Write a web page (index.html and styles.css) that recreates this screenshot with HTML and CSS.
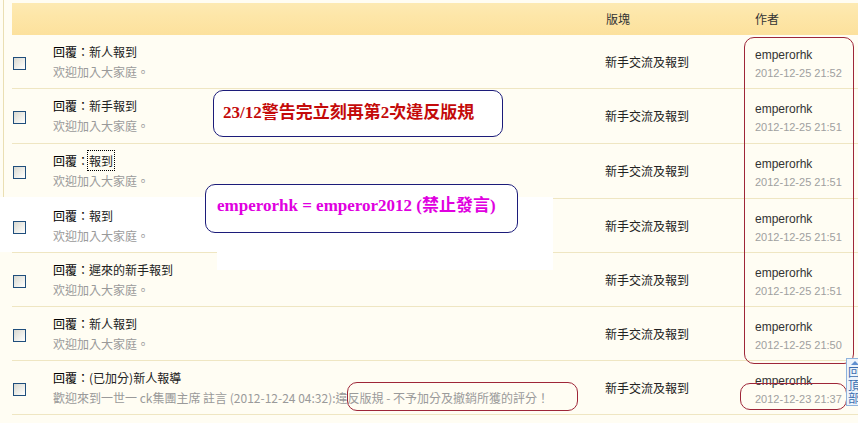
FILE: index.html
```html
<!DOCTYPE html>
<html>
<head>
<meta charset="utf-8">
<link rel="stylesheet" href="styles.css">
</head>
<body>
<div class="page">
  <span class="leftline"></span>
  <div class="list">
    <div class="head">
      <span></span><span></span>
      <span class="h-forum">版塊</span>
      <span class="h-author">作者</span>
    </div>

    <div class="row">
      <div class="cb-cell"><span class="cb"></span></div>
      <div class="topic"><div class="title"><b class="re">回覆：</b>新人報到</div><div class="msg">欢迎加入大家庭。</div></div>
      <div class="forum">新手交流及報到</div>
      <div class="author"><div class="name">emperorhk</div><div class="date">2012-12-25 21:52</div></div>
    </div>

    <div class="row tall">
      <div class="cb-cell"><span class="cb"></span></div>
      <div class="topic"><div class="title"><b class="re">回覆：</b>新手報到</div><div class="msg">欢迎加入大家庭。</div></div>
      <div class="forum">新手交流及報到</div>
      <div class="author"><div class="name">emperorhk</div><div class="date">2012-12-25 21:51</div></div>
    </div>

    <div class="row tall">
      <div class="cb-cell"><span class="cb"></span></div>
      <div class="topic"><div class="title"><b class="re">回覆：</b><span class="focus">報到</span></div><div class="msg">欢迎加入大家庭。</div></div>
      <div class="forum">新手交流及報到</div>
      <div class="author"><div class="name">emperorhk</div><div class="date">2012-12-25 21:51</div></div>
    </div>

    <div class="row">
      <div class="cb-cell"><span class="cb"></span></div>
      <div class="topic"><div class="title"><b class="re">回覆：</b>報到</div><div class="msg">欢迎加入大家庭。</div></div>
      <div class="forum">新手交流及報到</div>
      <div class="author"><div class="name">emperorhk</div><div class="date">2012-12-25 21:51</div></div>
    </div>

    <div class="row">
      <div class="cb-cell"><span class="cb"></span></div>
      <div class="topic"><div class="title"><b class="re">回覆：</b>遲來的新手報到</div><div class="msg">欢迎加入大家庭。</div></div>
      <div class="forum">新手交流及報到</div>
      <div class="author"><div class="name">emperorhk</div><div class="date">2012-12-25 21:51</div></div>
    </div>

    <div class="row">
      <div class="cb-cell"><span class="cb"></span></div>
      <div class="topic"><div class="title"><b class="re">回覆：</b>新人報到</div><div class="msg">欢迎加入大家庭。</div></div>
      <div class="forum">新手交流及報到</div>
      <div class="author"><div class="name">emperorhk</div><div class="date">2012-12-25 21:50</div></div>
    </div>

    <div class="row">
      <div class="cb-cell"><span class="cb"></span></div>
      <div class="topic"><div class="title"><b class="re">回覆：</b>(已加分)新人報導</div><div class="msg">歡迎來到一世一 ck集團主席 註言 (2012-12-24 04:32):違反版規 - 不予加分及撤銷所獲的評分！</div></div>
      <div class="forum">新手交流及報到</div>
      <div class="author"><div class="name">emperorhk</div><div class="date">2012-12-23 21:37</div></div>
    </div>
  </div>

  <div class="patch patch-a"></div>
  <div class="patch patch-b"></div>

  <div class="note note-warn">23/12警告完立刻再第2次違反版規</div>
  <div class="note note-alias">emperorhk = emperor2012 (禁止發言)</div>

  <div class="mark mark-author"></div>
  <div class="mark mark-date"></div>
  <div class="mark mark-msg"></div>

  <div class="backtop"><span class="bt-arrow"></span><span class="bt-text">回頂部</span></div>
</div>
</body>
</html>
```

FILE: styles.css
```css
html, body {
  margin: 0;
  padding: 0;
  overflow: hidden;
}
body {
  background: #fffdf3;
  font-family: "Noto Sans CJK TC", "Liberation Sans", sans-serif;
  font-size: 12px;
  color: #222;
}
.page {
  position: relative;
  width: 858px;
  height: 423px;
  overflow: hidden;
}
.leftline {
  position: absolute;
  left: 3px;
  top: 0;
  width: 1px;
  height: 197px;
  background: #eadfb3;
}
.list {
  margin-left: 12px;
  padding-top: 3px;
}
.head {
  display: grid;
  grid-template-columns: 41px 552px 150px 1fr;
  height: 32px;
  align-items: center;
  background: linear-gradient(#fdeab3, #fde6a8 40%, #fce19d);
  color: #333;
  line-height: 18px;
}
.h-forum { padding-left: 1px; }
.row {
  display: grid;
  grid-template-columns: 41px 552px 150px 1fr;
  height: 54px;
  box-sizing: border-box;
  border-bottom: 1px solid #efe6c2;
}
.row.tall { height: 55px; }
.cb-cell, .topic, .forum, .author {
  position: relative;
  z-index: 2;
}
.cb-cell { padding: 22px 0 0 1px; }
.cb {
  display: block;
  width: 11px;
  height: 11px;
  border: 1px solid #1f4e7c;
  background: linear-gradient(135deg, #d8d8d0, #f4f4f0 70%, #ffffff);
}
.topic {
  padding-top: 7px;
  line-height: 20px;
  white-space: nowrap;
}
.title { color: #222; }
.re { font-weight: normal; color: #000; }
.focus { outline: 1px dotted #000; outline-offset: 1px; }
.msg { color: #9a9a9a; }
.forum {
  padding-top: 18px;
  line-height: 18px;
  color: #222;
}
.author {
  padding-top: 11px;
  line-height: 18px;
  font-family: "Liberation Sans", "DejaVu Sans", sans-serif;
}
.name { font-size: 12px; color: #333; }
.date { font-size: 11px; color: #a0a0a0; }

.patch {
  position: absolute;
  z-index: 1;
  background: #ffffff;
}
.patch-a { left: 0; top: 197px; width: 553px; height: 55px; }
.patch-b { left: 217px; top: 252px; width: 336px; height: 18px; }

.note {
  position: absolute;
  z-index: 3;
  box-sizing: border-box;
  background: #ffffff;
  border: 1px solid #1c1c7a;
  border-radius: 10px;
  font-family: "Liberation Serif", "Noto Sans CJK TC", serif;
  font-weight: bold;
  font-size: 17px;
  line-height: 20px;
  white-space: nowrap;
}
.note-warn {
  left: 213px;
  top: 90px;
  width: 290px;
  height: 47px;
  padding: 12px 0 0 9px;
  color: #c40a0a;
}
.note-alias {
  left: 205px;
  top: 184px;
  width: 313px;
  height: 49px;
  padding: 11px 0 0 11px;
  color: #e000e0;
}

.mark {
  position: absolute;
  z-index: 4;
  box-sizing: border-box;
  border: 1px solid #9e2638;
  border-radius: 10px;
}
.mark-author { left: 744px; top: 37px; width: 110px; height: 327px; }
.mark-date { left: 740px; top: 383px; width: 107px; height: 27px; }
.mark-msg { left: 347px; top: 382px; width: 231px; height: 29px; }

.backtop {
  position: absolute;
  z-index: 5;
  left: 846px;
  top: 358px;
  width: 22px;
  height: 48px;
  box-sizing: border-box;
  border: 1px solid #8fb3dc;
  background: #edf4fb;
  color: #3a6db0;
  padding-left: 1px;
}
.bt-arrow {
  display: block;
  width: 0;
  height: 0;
  margin: 2px 0 0 3px;
  border-left: 4px solid transparent;
  border-right: 4px solid transparent;
  border-bottom: 4px solid #5f8fd0;
}
.bt-text {
  display: block;
  width: 12px;
  font-size: 12px;
  line-height: 13px;
  word-break: break-all;
}
```
